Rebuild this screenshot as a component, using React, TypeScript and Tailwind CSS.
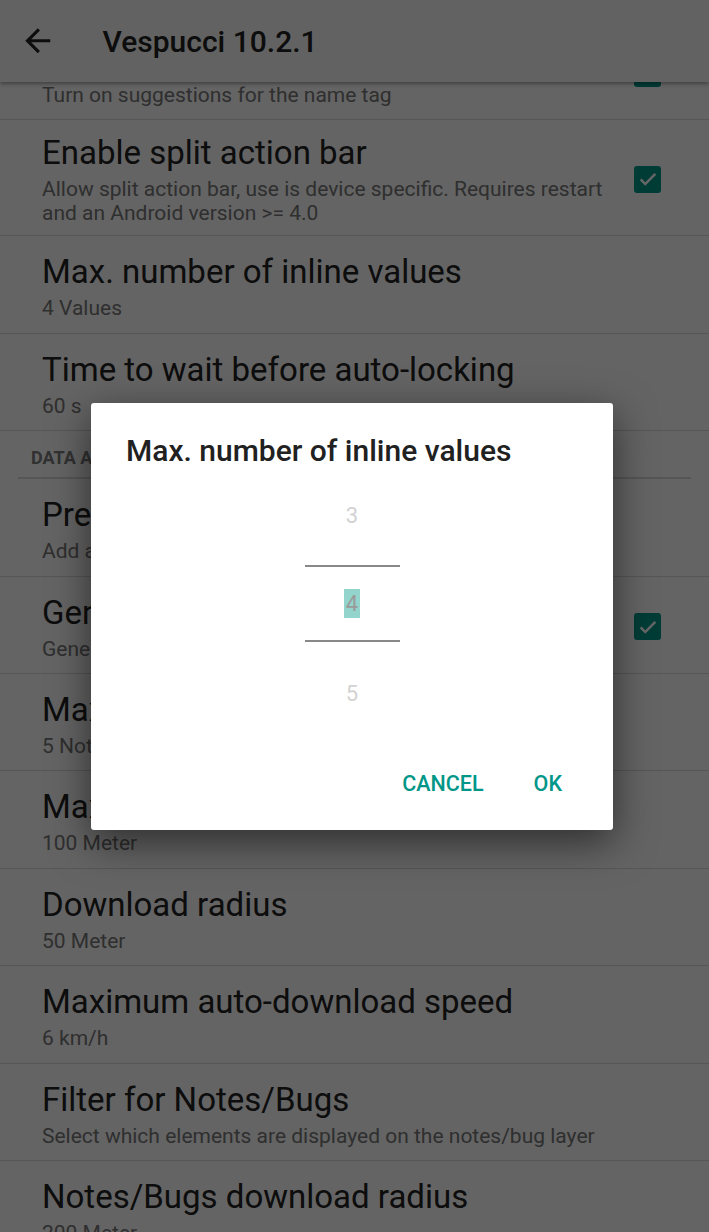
import { Fragment } from "react"

type Pref = {
    title: string
    summary?: string[]
    checked?: boolean
    category?: string
}

const prefs: Pref[] = [
    { title: "Name suggestions", summary: ["Turn on suggestions for the name tag"], checked: true },
    { title: "Enable split action bar", summary: ["Allow split action bar, use is device specific. Requires restart", "and an Android version >= 4.0"], checked: true },
    { title: "Max. number of inline values", summary: ["4 Values"] },
    { title: "Time to wait before auto-locking", summary: ["60 s"] },
    { category: "DATA AND NETWORK", title: "" },
    { title: "Presets", summary: ["Add and manage presets"] },
    { title: "Generate notes", summary: ["Generate notes for closed issues"], checked: true },
    { title: "Max. number of notes", summary: ["5 Notes"] },
    { title: "Max. auto-download distance", summary: ["100 Meter"] },
    { title: "Download radius", summary: ["50 Meter"] },
    { title: "Maximum auto-download speed", summary: ["6 km/h"] },
    { title: "Filter for Notes/Bugs", summary: ["Select which elements are displayed on the notes/bug layer"] },
    { title: "Notes/Bugs download radius", summary: ["200 Meter"] },
]

function Checkbox() {
    return <div className="w-[27px] h-[27px] rounded-[3px] bg-[#009688] flex items-center justify-center shrink-0">
        <svg width="22" height="22" viewBox="0 0 24 24">
            <path d="M4 12.5l5 5 11-11" fill="none" stroke="white" strokeWidth="2.8" />
        </svg>
    </div>
}

function PrefRow({ pref }: { pref: Pref }) {
    if (pref.category) {
        return <div className="h-[48px] flex flex-col">
            <div className="h-[46px] pl-[31px] pt-[15px] text-[18px] leading-[24px] font-bold text-[#7a7a7a]">{pref.category}</div>
            <div className="mx-[18px] h-[2px] bg-[#d6d6d6]" />
        </div>
    }
    const twoLines = (pref.summary?.length ?? 0) > 1
    return <div className={`flex flex-row items-center pl-[42px] pr-[48px] border-b border-[#d8d8d8] ${twoLines ? "pt-[13px] pb-[10px]" : "pt-[16px] pb-[12.4px]"}`}>
        <div className="flex-1 min-w-0">
            <div className="text-[33px] leading-[40px] text-[#212121] whitespace-nowrap">{pref.title}</div>
            <div className="pt-[4px] text-[21px] leading-[24px] text-[#757575] whitespace-nowrap">
                {pref.summary?.map((line, i) => <Fragment key={i}>{i > 0 && <br />}{line}</Fragment>)}
            </div>
        </div>
        {pref.checked && <Checkbox />}
    </div>
}

export default function App() {
    return <div className="relative h-[1232px] w-[709px] overflow-hidden bg-[#fafafa] flex flex-col" style={{ fontFamily: "Roboto, 'Noto Sans', sans-serif" }}>
        {/* app bar */}
        <div className="relative z-10 h-[82px] shrink-0 bg-[#f5f5f5] shadow-[0_2px_4px_rgba(0,0,0,0.35)] flex flex-row items-center">
            <svg width="37.5" height="37.5" viewBox="0 0 24 24" className="ml-[19px]">
                <path d="M20 11H7.83l5.59-5.59L12 4l-8 8 8 8 1.41-1.41L7.83 13H20v-2z" fill="#212121" />
            </svg>
            <div className="ml-[46px] text-[30px] font-medium text-[#212121]">Vespucci 10.2.1</div>
        </div>

        {/* scrolled list */}
        <div className="flex-1 overflow-hidden">
            <div className="-mt-[59px] flex flex-col">
                {prefs.map((p, i) => <PrefRow key={i} pref={p} />)}
            </div>
        </div>

        {/* dim + dialog */}
        <div className="absolute inset-0 z-20 bg-black/60 flex items-center justify-center">
            <div className="w-[522px] h-[427px] -ml-[5px] bg-white rounded-[3px] shadow-[0_12px_40px_rgba(0,0,0,0.55)] flex flex-col">
                <div className="pt-[32px] pl-[35px] text-[30px] leading-[32px] font-medium text-[#212121]">Max. number of inline values</div>
                <div className="flex flex-col items-center">
                    <div className="h-[98px] flex items-center text-[22px] text-[#d2d2d2]">3</div>
                    <div className="w-[95px] h-[77px] border-y-2 border-[#888888] flex items-center justify-center">
                        <span className="text-[22px] leading-[29px] text-[#9a9a9a] bg-[#93d5cc] px-[2px]">4</span>
                    </div>
                    <div className="h-[104px] flex items-center text-[22px] text-[#d2d2d2]">5</div>
                </div>
                <div className="flex-1 flex flex-row justify-end items-start pt-[26px] pr-[51px] gap-[50px] text-[21.5px] leading-[24px] font-medium text-[#009688]">
                    <span>CANCEL</span>
                    <span>OK</span>
                </div>
            </div>
        </div>
    </div>
}
